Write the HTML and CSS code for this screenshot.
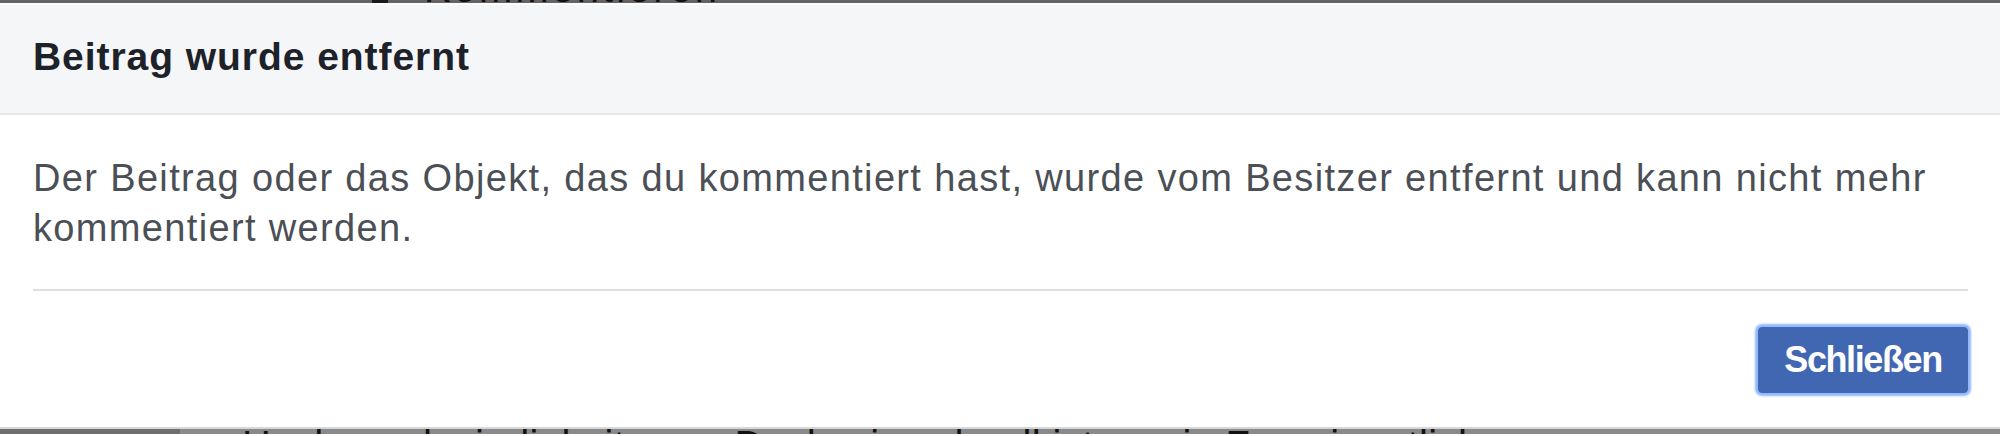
FILE: index.html
```html
<!DOCTYPE html>
<html lang="de">
<head>
<meta charset="utf-8">
<title>Beitrag wurde entfernt</title>
<link rel="stylesheet" href="styles.css">
</head>
<body>
  <div class="backdrop backdrop-top">
    <span class="backdrop-block"></span>
    <span class="backdrop-text backdrop-text-top">Kommentieren</span>
  </div>
  <div class="dialog">
    <div class="dialog-header">
      <h2 class="dialog-title">Beitrag wurde entfernt</h2>
    </div>
    <div class="dialog-content">
      <p class="dialog-message">Der Beitrag oder das Objekt, das du kommentiert hast, wurde vom Besitzer entfernt und kann nicht mehr kommentiert werden.</p>
      <div class="divider"></div>
      <div class="dialog-footer">
        <button class="btn-primary" type="button">Schließen</button>
      </div>
    </div>
  </div>
  <div class="backdrop backdrop-bottom">
    <span class="backdrop-shade"></span>
    <span class="backdrop-text backdrop-text-bottom">Hochgeschwindigkeitszug. Doch wie schnell ist es ein Zug eigentlich</span>
  </div>
</body>
</html>
```

FILE: styles.css
```css
html, body {
  margin: 0;
  padding: 0;
  background: #ffffff;
}

body {
  width: 2000px;
  height: 436px;
  overflow: hidden;
  font-family: "Liberation Sans", Arial, Helvetica, sans-serif;
}

.backdrop {
  display: flex;
  overflow: hidden;
  background: #7b7b7b;
}

.backdrop-top {
  height: 3px;
  background: #646464;
}

.backdrop-block {
  display: block;
  flex: none;
  width: 16px;
  height: 3px;
  margin-left: 372px;
  background: #1a1a1a;
}

.backdrop-text {
  display: block;
  white-space: nowrap;
  color: #111;
  font-size: 40px;
  line-height: 40px;
}

.backdrop-text-top {
  margin-left: 36px;
  margin-top: -32px;
  letter-spacing: 3px;
}

.backdrop-bottom {
  height: 5px;
  background: #8a8a8a;
}

.backdrop-shade {
  display: block;
  width: 180px;
  height: 5px;
  background: #6e6e6e;
  flex: none;
}

.backdrop-text-bottom {
  margin-left: 62px;
  margin-top: -4px;
  letter-spacing: 0.4px;
}

.dialog {
  border-top: 2px solid #fcfcfd;
  border-bottom: 2px solid #d6d7d9;
  background: #ffffff;
}

.dialog-header {
  height: 110px;
  box-sizing: border-box;
  padding: 32px 33px 0 33px;
  background: #f5f6f7;
  border-bottom: 2px solid #e5e6e9;
}

.dialog-title {
  margin: 0;
  font-size: 39px;
  line-height: 40px;
  font-weight: bold;
  letter-spacing: 0.95px;
  color: #1d2129;
}

.dialog-content {
  padding: 38px 32px 0 33px;
}

.dialog-message {
  margin: 0;
  font-size: 38px;
  line-height: 50px;
  letter-spacing: 1.35px;
  color: #4b4f56;
}

.divider {
  height: 2px;
  margin-top: 36px;
  background: #dddfe2;
}

.dialog-footer {
  display: flex;
  justify-content: flex-end;
  padding: 36px 0 34px 0;
}

.btn-primary {
  width: 210px;
  height: 66px;
  box-sizing: border-box;
  border: 1px solid #4267b2;
  border-radius: 4px;
  background: #4267b2;
  color: #ffffff;
  font-family: "Liberation Sans", Arial, Helvetica, sans-serif;
  font-weight: bold;
  font-size: 36px;
  letter-spacing: -1.4px;
  padding: 0;
  box-shadow: 0 0 2px 3px rgba(110, 160, 250, 0.75);
}
```
